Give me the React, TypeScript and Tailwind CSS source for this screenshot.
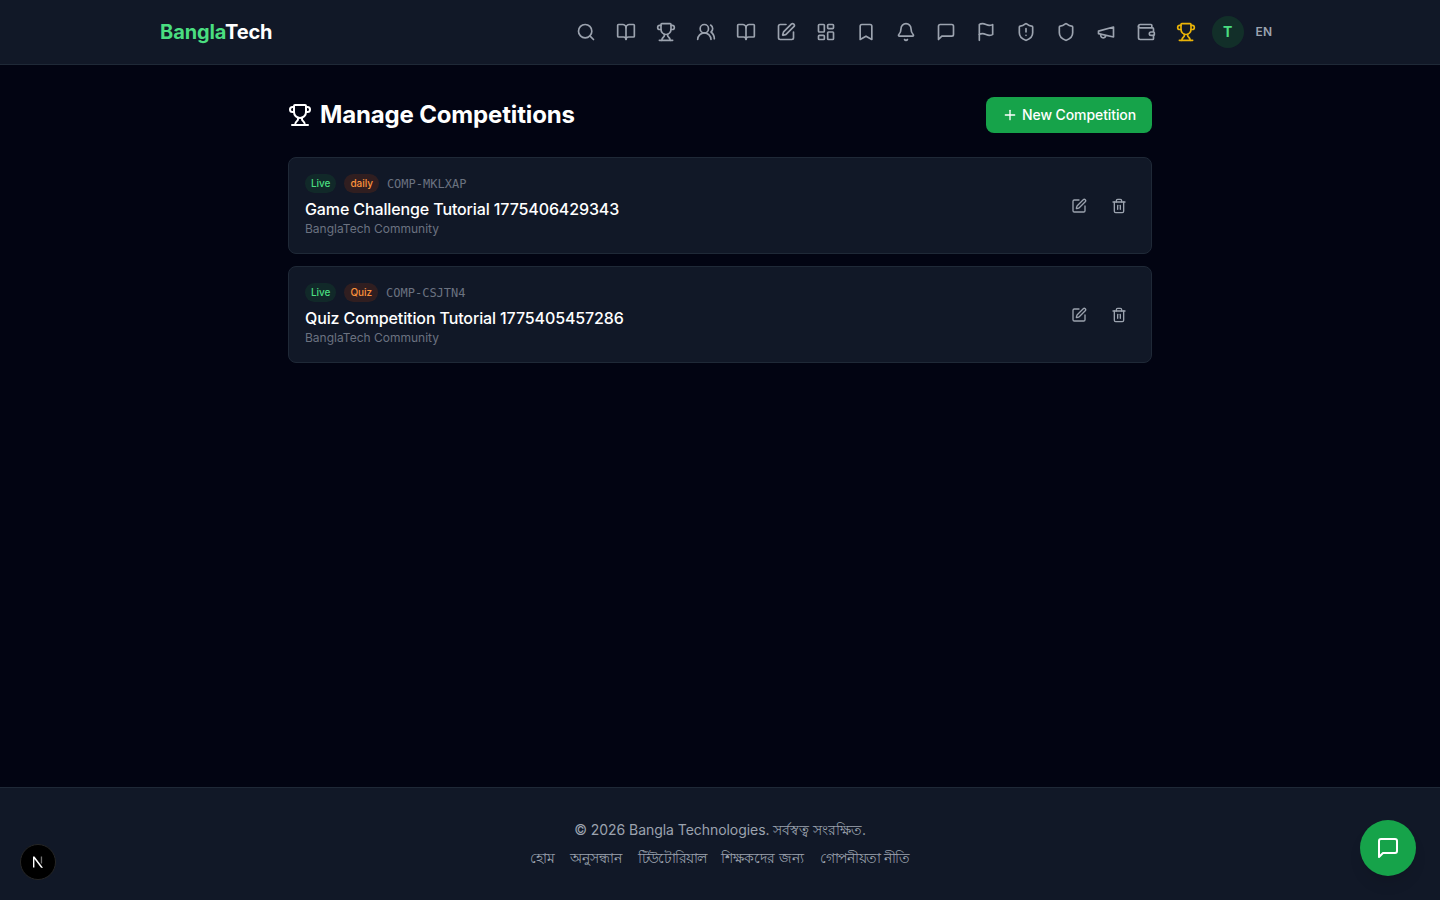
import {
  Bell,
  BookOpen,
  LayoutDashboard,
  Plus,
  Search,
  Shield,
  ShieldAlert,
  SquarePen,
  Trash2,
  Trophy,
  UsersRound,
  Wallet,
} from "lucide-react";
import type { ReactNode } from "react";

// lucide's current build redrew a few of these, the older shapes match the screenshot
function Stroke({ size = 20, children }: { size?: number; children: ReactNode }) {
  return (
    <svg width={size} height={size} viewBox="0 0 24 24" fill="none" stroke="currentColor" strokeWidth="2" strokeLinecap="round" strokeLinejoin="round">
      {children}
    </svg>
  );
}

const OldBookmark = () => (
  <Stroke>
    <path d="m19 21-7-4-7 4V5a2 2 0 0 1 2-2h10a2 2 0 0 1 2 2v16z" />
  </Stroke>
);
const OldChat = ({ size = 20 }: { size?: number }) => (
  <Stroke size={size}>
    <path d="M21 15a2 2 0 0 1-2 2H7l-4 4V5a2 2 0 0 1 2-2h14a2 2 0 0 1 2 2z" />
  </Stroke>
);
const OldFlag = () => (
  <Stroke>
    <path d="M4 15s1-1 4-1 5 2 8 2 4-1 4-1V3s-1 1-4 1-5-2-8-2-4 1-4 1z" />
    <path d="M4 22v-7" />
  </Stroke>
);
const OldMegaphone = () => (
  <Stroke>
    <path d="m3 11 18-5v12L3 14v-3z" />
    <path d="M11.6 16.8a3 3 0 1 1-5.8-1.6" />
  </Stroke>
);

const nav = [
  <Search size={20} />,
  <BookOpen size={20} />,
  <Trophy size={20} />,
  <UsersRound size={20} />,
  <BookOpen size={20} />,
  <SquarePen size={20} />,
  <LayoutDashboard size={20} />,
  <OldBookmark />,
  <Bell size={20} />,
  <OldChat />,
  <OldFlag />,
  <ShieldAlert size={20} />,
  <Shield size={20} />,
  <OldMegaphone />,
  <Wallet size={20} />,
];

const competitions = [
  { id: "COMP-MKLXAP", type: "daily", title: "Game Challenge Tutorial 1775406429343" },
  { id: "COMP-CSJTN4", type: "Quiz", title: "Quiz Competition Tutorial 1775405457286" },
];

const footerLinks = [
  { label: "হোম", cls: "tracking-[-0.9px]" },
  { label: "অনুসন্ধান", cls: "" },
  { label: "টিউটোরিয়াল", cls: "tracking-[-1.2px]" },
  { label: "শিক্ষকদের জন্য", cls: "tracking-[-0.08px]" },
  { label: "গোপনীয়তা নীতি", cls: "tracking-[-0.65px]" },
];

export default function App() {
  return (
    <div className="flex min-h-screen flex-col bg-[#020412] font-['Inter','Noto_Sans',sans-serif] text-white">
      {/* nav */}
      <header className="h-[65px] border-b border-[#1f2937] bg-[#111827]">
        <div className="mx-auto flex h-16 max-w-[1120px] items-center justify-between">
          <div className="text-xl font-bold tracking-[-0.1px]">
            <span className="text-[#4ade80]">Bangla</span>
            <span>Tech</span>
          </div>
          <nav className="flex items-center">
            {nav.map((icon, i) => (
              <span key={i} className="grid h-10 w-10 place-items-center text-[#9ca3af]">
                {icon}
              </span>
            ))}
            <span className="grid h-10 w-10 place-items-center text-[#eab308]">
              <Trophy size={20} />
            </span>
            <span className="mr-1 ml-1.5 grid h-8 w-8 place-items-center rounded-full bg-[#14532d]/40 text-sm font-bold text-[#4ade80]">T</span>
            <span className="px-2 text-xs font-semibold text-[#9ca3af]">EN</span>
          </nav>
        </div>
      </header>

      {/* content */}
      <main className="mx-auto w-full max-w-[896px] flex-1 px-4 py-8">
        <div className="mb-6 flex items-center justify-between">
          <h1 className="flex items-center gap-2 text-2xl font-bold tracking-[-0.16px]">
            <Trophy size={24} />
            Manage Competitions
          </h1>
          <button className="flex h-9 items-center gap-1 rounded-lg bg-[#16a34a] px-4 text-sm font-medium tracking-[-0.1px] text-white">
            <Plus size={16} />
            New Competition
          </button>
        </div>
        <div className="flex flex-col gap-3">
          {competitions.map((c) => (
            <div key={c.id} className="flex h-[97px] items-center justify-between rounded-lg border border-[#1f2937] bg-[#111827] p-4">
              <div>
                <div className="flex items-center gap-2">
                  <span className="rounded-full bg-[#14532d]/30 px-1.5 py-0.5 text-[10px] leading-[15px] font-medium tracking-[-0.05px] text-[#4ade80]">Live</span>
                  <span className="rounded-full bg-[#7c2d12]/30 px-1.5 py-0.5 text-[10px] leading-[15px] font-medium tracking-[-0.05px] text-[#fb923c]">{c.type}</span>
                  <span className="font-['DejaVu_Sans_Mono',monospace] text-xs text-[#6b7280]">{c.id}</span>
                </div>
                <h2 className="mt-1 text-base leading-6 font-medium tracking-[-0.12px]">{c.title}</h2>
                <p className="text-xs leading-4 text-[#6b7280]">BanglaTech Community</p>
              </div>
              <div className="flex items-center gap-2">
                <span className="grid h-8 w-8 place-items-center text-[#9ca3af]">
                  <SquarePen size={16} />
                </span>
                <span className="grid h-8 w-8 place-items-center text-[#9ca3af]">
                  <Trash2 size={16} />
                </span>
              </div>
            </div>
          ))}
        </div>
      </main>

      {/* footer */}
      <footer className="h-[113px] border-t border-[#1f2937] bg-[#111827] pt-8 text-center text-sm text-[#9ca3af]">
        <p className="leading-5 tracking-[-0.05px]">© 2026 Bangla Technologies. সর্বস্বত্ব সংরক্ষিত.</p>
        <div className="mt-2 flex justify-center gap-4">
          {footerLinks.map((l) => (
            <span key={l.label} className={`leading-5 ${l.cls}`}>{l.label}</span>
          ))}
        </div>
      </footer>

      {/* dev indicator + chat, both float over the page */}
      <div className="fixed bottom-5 left-5 grid h-9 w-9 place-items-center rounded-full border border-[#262626] bg-black">
        <svg width="16" height="16" viewBox="0 0 16 16" fill="none">
          <path d="M3 2.5h1.5L13 13.8h-1.9L4.4 5v8.5H3z" fill="#fff" />
          <rect x="10.8" y="2.5" width="1.3" height="7" fill="#fff" fillOpacity="0.45" />
        </svg>
      </div>
      <button className="fixed right-6 bottom-6 grid h-14 w-14 place-items-center rounded-full bg-[#16a34a] text-white shadow-lg">
        <OldChat size={24} />
      </button>
    </div>
  );
}
